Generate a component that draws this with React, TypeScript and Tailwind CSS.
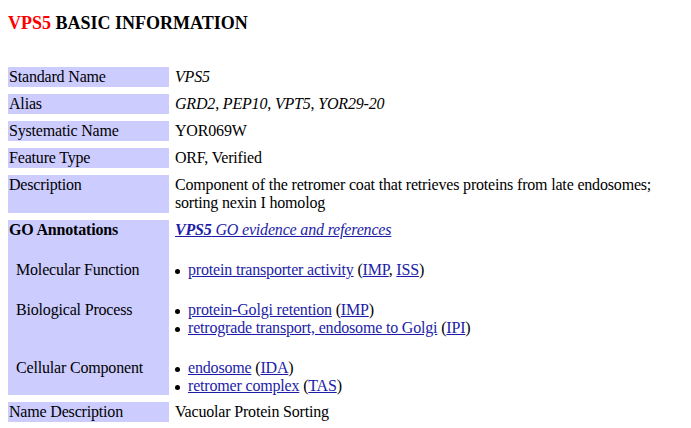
import React from "react";

const LINK = "text-[#1c1ca8] underline";

interface Term {
  name: string;
  codes: string[];
}

interface GoGroup {
  label: string;
  terms: Term[];
  first?: boolean;
}

const GO: GoGroup[] = [
  {
    label: "Molecular Function",
    first: true,
    terms: [{ name: "protein transporter activity", codes: ["IMP", "ISS"] }],
  },
  {
    label: "Biological Process",
    terms: [
      { name: "protein-Golgi retention", codes: ["IMP"] },
      { name: "retrograde transport, endosome to Golgi", codes: ["IPI"] },
    ],
  },
  {
    label: "Cellular Component",
    terms: [
      { name: "endosome", codes: ["IDA"] },
      { name: "retromer complex", codes: ["TAS"] },
    ],
  },
];

function Row({ label, children }: { label: React.ReactNode; children: React.ReactNode }) {
  return (
    <div className="flex">
      <div className="w-[161px] shrink-0 bg-[#ccccff] px-[1px] py-[1px]">{label}</div>
      <div className="ml-[5px] px-[1px] py-[1px]">{children}</div>
    </div>
  );
}

function TermLine({ term }: { term: Term }) {
  return (
    <li className="flex">
      <span className="flex h-[18px] w-[13px] shrink-0 items-center">
        <span className="mt-[2px] h-[5px] w-[5px] rounded-full bg-black" />
      </span>
      <span>
        <a href="#" className={LINK}>
          {term.name}
        </a>{" "}
        (
        {term.codes.map((c, i) => (
          <React.Fragment key={c}>
            {i > 0 && ", "}
            <a href="#" className={LINK}>
              {c}
            </a>
          </React.Fragment>
        ))}
        )
      </span>
    </li>
  );
}

export default function App() {
  return (
    <div className="min-h-[428px] bg-white px-2 pt-[13px] font-['Liberation_Serif',serif] text-[16px] leading-[18px] tracking-[-0.18px] text-black">
      <h1 className="text-[18px] font-bold leading-[21px] tracking-normal">
        <span className="text-[#ff0000]">VPS5</span> BASIC INFORMATION
      </h1>

      <div className="mt-[33px] flex flex-col gap-[7px]">
        <Row label="Standard Name">
          <i>VPS5</i>
        </Row>
        <Row label="Alias">
          <i>GRD2</i>, <i>PEP10</i>, <i>VPT5</i>, <i>YOR29-20</i>
        </Row>
        <Row label="Systematic Name">YOR069W</Row>
        <Row label="Feature Type">ORF, Verified</Row>
        <Row label="Description">
          Component of the retromer coat that retrieves proteins from late endosomes;
          <br />
          sorting nexin I homolog
        </Row>

        {/* GO block: one continuous label background */}
        <div className="flex flex-col">
          <Row label={<b>GO Annotations</b>}>
            <a href="#" className={LINK}>
              <i>
                <b>VPS5</b> GO evidence and references
              </i>
            </a>
          </Row>
          {GO.map((g, i) => (
            <div key={g.label} className="flex">
              <div
                className={
                  "w-[161px] shrink-0 bg-[#ccccff] pl-[8px] " +
                  (g.first ? "pt-[21px]" : "pt-[22px]") +
                  (i === GO.length - 1 ? " pb-[1px]" : "")
                }
              >
                {g.label}
              </div>
              <ul className={"ml-[5px] pl-[1px] " + (g.first ? "pt-[21px]" : "pt-[22px]")}>
                {g.terms.map((t) => (
                  <TermLine key={t.name} term={t} />
                ))}
              </ul>
            </div>
          ))}
        </div>

        <Row label="Name Description">Vacuolar Protein Sorting</Row>
      </div>
    </div>
  );
}
